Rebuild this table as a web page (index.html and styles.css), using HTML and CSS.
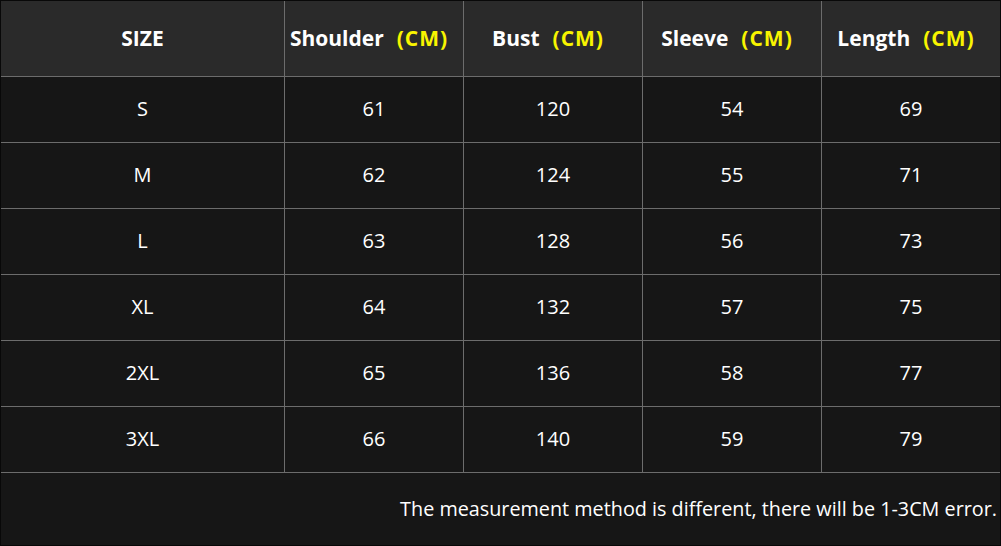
FILE: index.html
```html
<!DOCTYPE html>
<html>
<head>
<meta charset="utf-8">
<link rel="stylesheet" href="styles.css">
</head>
<body>
<div class="chart">
  <div class="cell head">SIZE</div>
  <div class="cell head unit-head">Shoulder<span class="unit">(CM)</span></div>
  <div class="cell head unit-head">Bust<span class="unit">(CM)</span></div>
  <div class="cell head unit-head">Sleeve<span class="unit">(CM)</span></div>
  <div class="cell head unit-head">Length<span class="unit">(CM)</span></div>

  <div class="cell">S</div><div class="cell">61</div><div class="cell">120</div><div class="cell">54</div><div class="cell">69</div>
  <div class="cell">M</div><div class="cell">62</div><div class="cell">124</div><div class="cell">55</div><div class="cell">71</div>
  <div class="cell">L</div><div class="cell">63</div><div class="cell">128</div><div class="cell">56</div><div class="cell">73</div>
  <div class="cell">XL</div><div class="cell">64</div><div class="cell">132</div><div class="cell">57</div><div class="cell">75</div>
  <div class="cell">2XL</div><div class="cell">65</div><div class="cell">136</div><div class="cell">58</div><div class="cell">77</div>
  <div class="cell">3XL</div><div class="cell">66</div><div class="cell">140</div><div class="cell">59</div><div class="cell">79</div>

  <div class="note">The measurement method is different, there will be 1-3CM error.</div>
</div>
</body>
</html>
```
FILE: styles.css
```css
html, body {
  margin: 0;
  padding: 0;
  background: #0a0a0a;
}
.chart {
  width: 999px;
  border: 1px solid #080808;
  display: grid;
  grid-template-columns: 283px repeat(4, 178px);
  grid-template-rows: 75px repeat(6, 65px) 72px;
  gap: 1px;
  background: #6c6c6c;
  font-family: "Open Sans", "Noto Sans", sans-serif;
  color: #ffffff;
}
.cell {
  background: #161616;
  display: flex;
  align-items: center;
  justify-content: center;
  font-size: 20px;
  padding-bottom: 2px;
}
.cell.head {
  background: #2a2a2a;
  font-weight: 700;
  font-size: 21px;
  white-space: nowrap;
  padding-bottom: 2px;
}
.cell.unit-head {
  padding-right: 10px;
}
.unit {
  color: #f8f400;
  margin-left: 13px;
  letter-spacing: 1px;
}
.note {
  grid-column: 1 / -1;
  background: #161616;
  display: flex;
  align-items: center;
  justify-content: flex-end;
  padding-right: 3px;
  font-size: 19.8px;
  padding-bottom: 2px;
}
```
